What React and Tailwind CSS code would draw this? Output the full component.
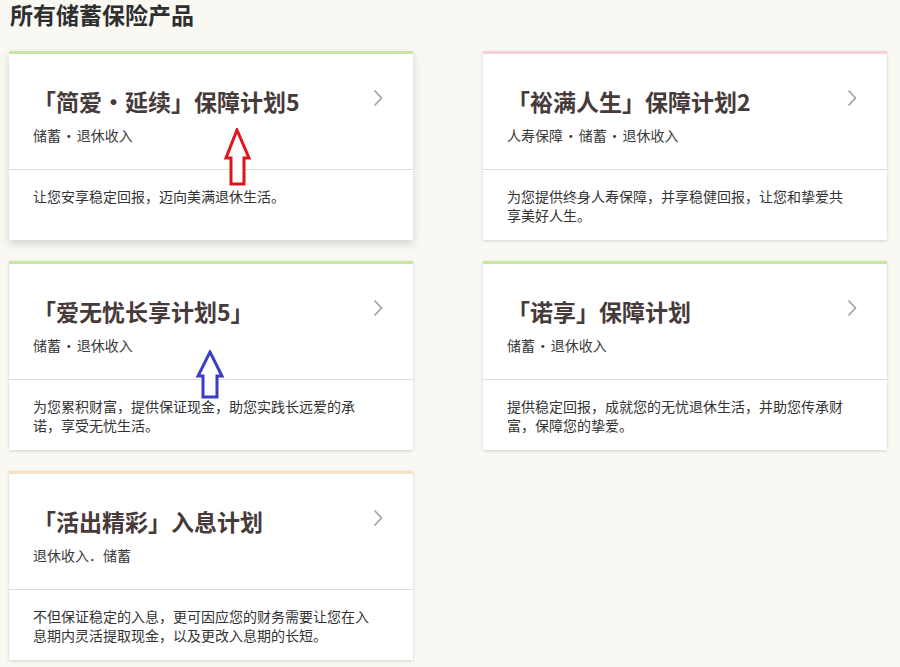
const products = [
  {
    name: '「简爱·延续」保障计划5',
    tags: '储蓄 · 退休收入',
    desc: '让您安享稳定回报，迈向美满退休生活。',
    bar: 'border-t-[#c6e6a3]',
    hover: true,
  },
  {
    name: '「裕满人生」保障计划2',
    tags: '人寿保障 · 储蓄 · 退休收入',
    desc: '为您提供终身人寿保障，并享稳健回报，让您和挚爱共享美好人生。',
    bar: 'border-t-[#f4cfd5]',
  },
  {
    name: '「爱无忧长享计划5」',
    tags: '储蓄 · 退休收入',
    desc: '为您累积财富，提供保证现金，助您实践长远爱的承诺，享受无忧生活。',
    bar: 'border-t-[#c6e6a3]',
  },
  {
    name: '「诺享」保障计划',
    tags: '储蓄 · 退休收入',
    desc: '提供稳定回报，成就您的无忧退休生活，并助您传承财富，保障您的挚爱。',
    bar: 'border-t-[#c6e6a3]',
  },
  {
    name: '「活出精彩」入息计划',
    tags: '退休收入．储蓄',
    desc: '不但保证稳定的入息，更可因应您的财务需要让您在入息期内灵活提取现金，以及更改入息期的长短。',
    bar: 'border-t-[#f5e2c2]',
  },
]

const Chevron = () => (
  <svg className="absolute right-[30px] top-[35px]" width="10" height="18" viewBox="0 0 10 18" fill="none">
    <path d="M1.5 1.5 L8.5 9 L1.5 16.5" stroke="#a0a0a0" strokeWidth="1.6" />
  </svg>
)

function ProductCard({ p }) {
  return (
    <div
      className={`bg-white border-t-[3px] ${p.bar} flex flex-col ${
        p.hover ? 'shadow-[0_4px_9px_rgba(0,0,0,0.15)]' : 'shadow-[0_1px_3px_rgba(0,0,0,0.16)]'
      }`}
    >
      <div className="relative px-6 pt-[31px] pb-[24px] border-b border-[#dcdcdc]">
        <h2 className="text-[23px] leading-8 font-bold text-[#463a3a]">{p.name}</h2>
        <p className="mt-[8px] text-sm leading-5 text-[#3a3a3a]">{p.tags.replaceAll(' · ', '\u200a·\u200a')}</p>
        <Chevron />
      </div>
      <p className="pl-6 pr-[40px] pt-[17px] pb-[15px] text-sm leading-[19px] text-[#333]">{p.desc}</p>
    </div>
  )
}

export default function App() {
  return (
    <div
      className="relative min-h-screen bg-[#f9f8f3] pl-[9px] pr-3"
      style={{ fontFamily: '"Noto Sans CJK SC", "Noto Sans", sans-serif' }}
    >
      <h1 className="pl-px text-[23px] leading-7 font-bold text-[#2f2f2f]">所有储蓄保险产品</h1>
      <div className="grid grid-cols-[404px_404px] gap-x-[70px] gap-y-[21px] mt-[23px]">
        {products.map(p => <ProductCard key={p.name} p={p} />)}
      </div>

      {/* annotation arrows */}
      <svg className="absolute left-[222px] top-[128px]" width="30" height="60" viewBox="0 0 30 60">
        <path d="M15 2 L27 30 L22 30 L22 56 L9 56 L9 30 L4 30 Z" fill="white" stroke="#e0141c" strokeWidth="3" strokeLinejoin="miter" />
      </svg>
      <svg className="absolute left-[196px] top-[350px]" width="30" height="50" viewBox="0 0 30 50">
        <path d="M14 2 L26 26 L21 26 L21 47 L7 47 L7 26 L2 26 Z" fill="white" stroke="#3b3fc4" strokeWidth="3" strokeLinejoin="miter" />
      </svg>
    </div>
  )
}
